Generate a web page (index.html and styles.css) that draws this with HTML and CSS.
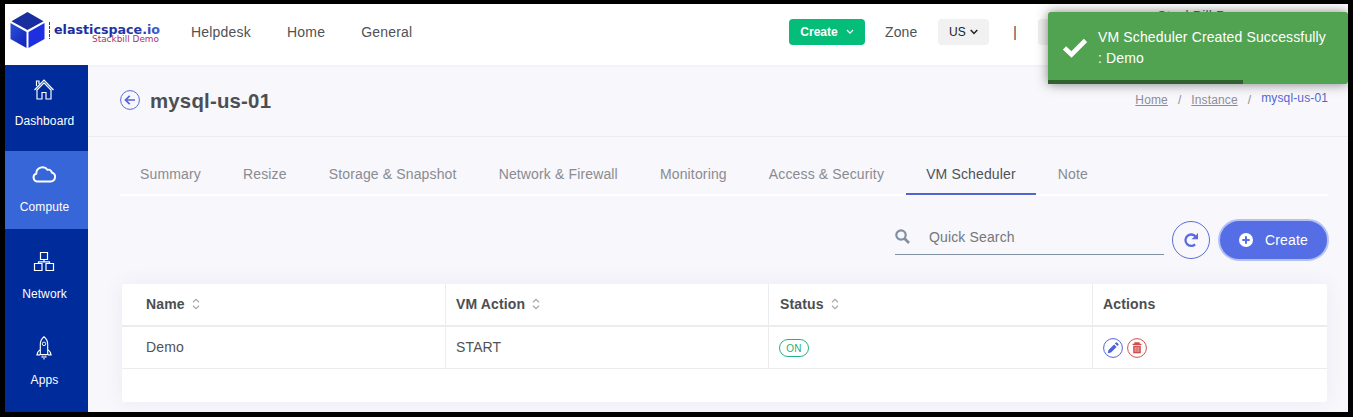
FILE: index.html
```
<!DOCTYPE html>
<html lang="en">
<head>
<meta charset="utf-8">
<title>mysql-us-01</title>
<link rel="stylesheet" href="styles.css">
</head>
<body>
<div class="frame">
  <header class="topbar">
    <svg class="logo" width="158" height="40" viewBox="0 0 158 40">
      <defs><linearGradient id="g" x1="0" y1="0" x2="1" y2="1"><stop offset="0" stop-color="#2a52d8"/><stop offset="1" stop-color="#1220b8"/></linearGradient>
      <linearGradient id="t" x1="0" x2="1"><stop offset="0" stop-color="#1b2a9c"/><stop offset=".8" stop-color="#2437a8"/><stop offset="1" stop-color="#3f62d6"/></linearGradient></defs>
      <path d="M18.500 1 34.500 10.200 18.500 19 2.500 10.200z" fill="#1a2f9e"/>
      <path d="M1.500 12 17.500 21V37L1.500 28z" fill="url(#g)"/>
      <path d="M35.500 12 19.500 21V37L35.500 28z" fill="#1d2fe0"/>
      <path d="M40.500 11V28" stroke="#2b3f9d" stroke-width="1" stroke-dasharray="3 1"/>
      <text class="logo-name" x="45" y="22.500" textLength="106" lengthAdjust="spacingAndGlyphs" fill="url(#t)">elasticspace.io</text>
      <text class="logo-sub" x="83" y="31" textLength="67" lengthAdjust="spacingAndGlyphs" fill="#a8326e">Stackbill Demo</text>
    </svg>
    <nav class="mainnav"><a>Helpdesk</a><a>Home</a><a>General</a></nav>
    <div class="tools">
      <button class="btn-green">Create <svg width="8" height="6" viewBox="0 0 8 6"><path d="M1 1l3 3.200L7 1" fill="none" stroke="#fff" stroke-width="1.200"/></svg></button>
      <span class="zone">Zone</span>
      <button class="btn-gray">US <svg width="8" height="6" viewBox="0 0 8 6"><path d="M.7 1 4 4.500 7.300 1" fill="none" stroke="#222" stroke-width="1.500"/></svg></button>
      <span class="bar">|</span>
      <span class="account"><span class="user">StackBill Demo</span></span>
    </div>
  </header>
  <div class="body">
    <aside class="side">
      <a class="item"><svg width="22" height="24" viewBox="0 0 22 24"><path d="M1.500 13 11 3l9.500 10M3.500 13.500 11 5.800l7.500 7.700M4 12.500V22h5v-6.500h4V22h5v-9.500M3.500 9V4H6v3" fill="none" stroke="#fff" stroke-width="1.150"/></svg><span>Dashboard</span></a>
      <a class="item active"><svg width="28" height="24" viewBox="0 0 26 24"><path d="M6.500 19.500h13.200a4.600 4.600 0 0 0 1.100-9 3.300 3.300 0 0 0-4.200-2.700A6.300 6.300 0 0 0 5.300 11.700a4 4 0 0 0 1.200 7.800z" fill="none" stroke="#fff" stroke-width="1.900"/></svg><span>Compute</span></a>
      <a class="item"><svg width="22" height="24" viewBox="0 0 22 24"><path d="M7.500 2.500h7v7h-7zM1.500 13.500h7.500v7h-7.500zM13 13.500h7.500v7h-7.500zM11 9.500v2.500M5.500 13.500v-1.700h11v1.700" fill="none" stroke="#fff" stroke-width="1.200"/></svg><span>Network</span></a>
      <a class="item"><svg width="22" height="24" viewBox="0 0 22 26"><path d="M11 .8C8.200 3 7 6 7 9v11h8V9c0-3-1.200-6-4-8.200zM7 14.500C5 16 3.800 18 3.300 20.500h3.700M15 14.500c2 1.500 3.200 3.500 3.700 6h-3.700M9 21v2.500M11 21v4.500M13 21v2.500" fill="none" stroke="#fff" stroke-width="1.200"/><circle cx="11" cy="8.500" r="1.900" fill="none" stroke="#fff"/></svg><span>Apps</span></a>
    </aside>
    <main class="main">
      <div class="titlebar">
        <svg class="back" width="20" height="20" viewBox="0 0 20 20"><circle cx="10" cy="10" r="9.400" fill="none" stroke="#5a6bd8"/><path d="M15 10H6M9.700 5.800 5.500 10l4.200 4.200" fill="none" stroke="#5565d6" stroke-width="1.700"/></svg>
        <h1>mysql-us-01</h1>
        <div class="crumbs"><a>Home</a><i>/</i><a>Instance</a><i>/</i><b>mysql-us-01</b></div>
      </div>
      <nav class="tabs"><a>Summary</a><a>Resize</a><a>Storage &amp; Snapshot</a><a>Network &amp; Firewall</a><a>Monitoring</a><a>Access &amp; Security</a><a class="on">VM Scheduler</a><a>Note</a></nav>
      <div class="actions">
        <div class="search"><svg width="15" height="15" viewBox="0 0 15 15"><circle cx="6" cy="6" r="4.700" fill="none" stroke="#8090a2" stroke-width="2.200"/><path d="M9.500 9.500 14 14" stroke="#8090a2" stroke-width="2.600"/></svg><span>Quick Search</span></div>
        <button class="reload"><svg width="16" height="16" viewBox="0 0 16 16"><path d="M12.600 4.600A5.700 5.700 0 1 0 12.100 12.300" fill="none" stroke="#5a6bdc" stroke-width="2.300"/><path d="M15 .8v6.500H8.500L10.700 5.200 12.500 4z" fill="#5a6bdc"/></svg></button>
        <button class="create"><svg width="14" height="14" viewBox="0 0 14 14"><circle cx="7" cy="7" r="7" fill="#fff"/><path d="M7 3.300v7.400M3.300 7h7.400" stroke="#556ee6" stroke-width="2"/></svg>Create</button>
      </div>
      <div class="card">
        <div class="row head">
          <div>Name<svg class="sort" width="8" height="12" viewBox="0 0 8 12"><path d="M1 4.200 4 1.300l3 2.900M1 7.800l3 2.900 3-2.900" fill="none" stroke="#a8a8a8" stroke-width="1.200"/></svg></div>
          <div>VM Action<svg class="sort" width="8" height="12" viewBox="0 0 8 12"><path d="M1 4.200 4 1.300l3 2.900M1 7.800l3 2.900 3-2.900" fill="none" stroke="#a8a8a8" stroke-width="1.200"/></svg></div>
          <div>Status<svg class="sort" width="8" height="12" viewBox="0 0 8 12"><path d="M1 4.200 4 1.300l3 2.900M1 7.800l3 2.900 3-2.900" fill="none" stroke="#a8a8a8" stroke-width="1.200"/></svg></div>
          <div>Actions</div>
        </div>
        <div class="row data">
          <div>Demo</div><div>START</div>
          <div><span class="badge">ON</span></div>
          <div class="icons">
            <svg width="20" height="20" viewBox="0 0 20 20"><circle cx="10" cy="10" r="9.400" fill="none" stroke="#5065d8"/><path d="M4.800 15.200 5.500 12l5.600-5.600 2.500 2.500L8 14.500zM11.900 5.600l1-1q.6-.5 1.200 0l1.300 1.300q.5.600 0 1.200l-1 1z" fill="#4c63d8"/></svg>
            <svg width="20" height="20" viewBox="0 0 20 20"><circle cx="10" cy="10" r="9.400" fill="none" stroke="#d2504f"/><path d="M5.500 6.300h9M8 6V5h4v1" fill="none" stroke="#cf4a4a" stroke-width="1.300"/><path d="M6.200 7.700h7.600V15.300H6.200z" fill="#cf4a4a"/><path d="M8.200 8.800v5.300M10 8.800v5.300M11.800 8.800v5.300" stroke="#f3c9c9" stroke-width=".8"/></svg>
          </div>
        </div>
      </div>
    </main>
  </div>
  <div class="toast">
    <svg width="24" height="20" viewBox="0 0 24 20"><path d="M1.500 10 8.500 16.500 22.500 2.500" fill="none" stroke="#fff" stroke-width="4.600"/></svg>
    <p>VM Scheduler Created Successfully : Demo</p>
    <div class="progress"></div>
  </div>
</div>
</body>
</html>
```
FILE: styles.css
```
* { box-sizing: border-box; }
body { margin: 0; background: #000; font: 14px/20px "Liberation Sans", Arial, sans-serif; letter-spacing: .14px; color: #4f5256; overflow: hidden; }
button { font: inherit; letter-spacing: inherit; border: 0; margin: 0; padding: 0; }
svg { display: block; flex: none; }
.frame { position: relative; width: 1353px; height: 417px; border: solid #000; border-width: 4px 5px 5px; display: flex; flex-direction: column; overflow: hidden; background: #f7f7fc; }
.topbar { height: 61px; flex: none; background: #fff; display: flex; align-items: flex-start; box-shadow: 0 1px 2px rgba(60,60,100,.05); z-index: 1; }
.logo { margin: 7px 0 0 4px; overflow: visible; }
.logo-name { font: 700 13px "DejaVu Sans", sans-serif; letter-spacing: 0; }
.logo-sub { font: 400 8.500px "DejaVu Sans", sans-serif; letter-spacing: 0; }
.mainnav { display: flex; gap: 36px; padding: 18px 0 0 24px; letter-spacing: .2px; }
.tools { margin-left: auto; display: flex; align-items: center; height: 26px; margin-top: 15px; width: 559px; }
.btn-green { width: 76px; height: 26px; border-radius: 4px; background: #04bd79; color: #fff; font-weight: 700; font-size: 12px; letter-spacing: 0; display: flex; align-items: center; justify-content: center; gap: 8px; }
.zone { margin: 0 21px 0 20px; width: 32px; white-space: nowrap; }
.btn-gray { width: 51px; height: 26px; border-radius: 4px; background: #f1f1f2; color: #222; font-size: 12px; display: flex; align-items: center; justify-content: center; gap: 4px; }
.bar { margin-left: 24px; width: 25px; font-size: 15px; }
.account { width: 290px; height: 26px; border-radius: 4px; background: linear-gradient(90deg, #f0f0f0 40px, #fff 40px); }
.user { display: block; margin: -13px 0 0 119px; }
.body { display: flex; flex: 1; min-height: 0; }
.side { width: 83px; background: #002c9b; display: flex; flex-direction: column; gap: 8.400px; }
.item { height: 78px; flex: none; display: flex; flex-direction: column; align-items: center; color: #fff; font-size: 12px; }
.item svg { height: 24px; margin: 12px 0 0 -5px; }
.item span { margin: 10px 0 0 -4px; letter-spacing: .1px; }
.active { background: #3766d8; }
.item.active svg { margin: 11px 0 1px -5px; }
.main { flex: 1; min-width: 0; }
.titlebar { height: 72px; border-bottom: 1px solid #ebebf1; display: flex; align-items: center; padding: 0 20px 0 32px; }
h1 { font-size: 20.400px; line-height: 24px; letter-spacing: .2px; margin: 0 0 0 10px; color: #4c4e52; }
.back { margin-top: -2px; }
.crumbs { margin: -2px 0 0 auto; display: flex; font-size: 12px; letter-spacing: .13px; }
.crumbs a { text-decoration: underline; color: #8c8e96; }
.crumbs i { font-style: normal; margin: 0 10px; color: #8c8e96; }
.crumbs b { font-weight: 400; color: #5566cf; margin-top: -2px; }
.tabs { margin: 21px 20px 0 32px; height: 38px; border-bottom: 2px solid #fff; display: flex; gap: 2.100px; }
.tabs a { padding: 6px 20px 0; height: 37px; color: #8a8b90; white-space: nowrap; }
.tabs .on { color: #4f5256; border-bottom: 2px solid #5065cf; }
.actions { display: flex; margin: 24px 19px 0; justify-content: flex-end; align-items: center; height: 40px; }
.search { width: 269px; height: 35px; border-bottom: 1px solid #8090a0; display: flex; gap: 19px; padding-top: 7px; color: #74777b; margin-right: 8px; align-self: flex-start; }
.search svg { margin-top: 2px; }
.reload { width: 38px; height: 38px; border: 1px solid #5d6ddb; border-radius: 50%; background: none; display: flex; align-items: center; justify-content: center; margin-right: 8px; }
.create { width: 111px; height: 42px; border: 2px solid #b5c1f5; border-radius: 21px; background: #556ee6; color: #fff; display: flex; align-items: center; padding-left: 19px; gap: 12px; }
.card { margin: 24px 21px 0 34px; height: 118px; background: #fff; border-radius: 3px; box-shadow: 0 0 20px rgba(70,70,120,.07); }
.row { display: grid; grid-template-columns: 324px 323px 324px 1fr; }
.row > div { padding: 0 0 2px 11px; border-right: 1px solid #ececef; display: flex; align-items: center; }
.row > div:first-child { padding-left: 24px; }
.row > div:last-child { border-right: 0; padding-left: 10px; }
.head { height: 43px; border-bottom: 2px solid #ececef; font-weight: 700; color: #4c4e52; }
.data { height: 42px; border-bottom: 1px solid #ececef; }
.row > div:nth-child(2) { padding-left: 10px; }
.row .icons { gap: 4px; padding-bottom: 0; }
.sort { margin-left: 7px; }
.badge { width: 30px; height: 18px; border: 1px solid #1fb47d; border-radius: 9px; color: #1fae78; font-size: 10px; line-height: 17px; text-align: center; margin: 2px 0 0 -1px; }
.toast { position: absolute; z-index: 2; top: 8px; right: 0; width: 300px; height: 72px; background: #51a351; border-radius: 3px; box-shadow: 0 0 12px rgba(80,80,80,.7); color: #fff; display: flex; padding: 15px 15px 0; }
.toast svg { margin-top: 11px; }
.toast p { margin: 0 0 0 11px; line-height: 21px; flex: 1; }
.progress { position: absolute; left: 0; bottom: 0; height: 4px; width: 195px; background: #306230; }
```
